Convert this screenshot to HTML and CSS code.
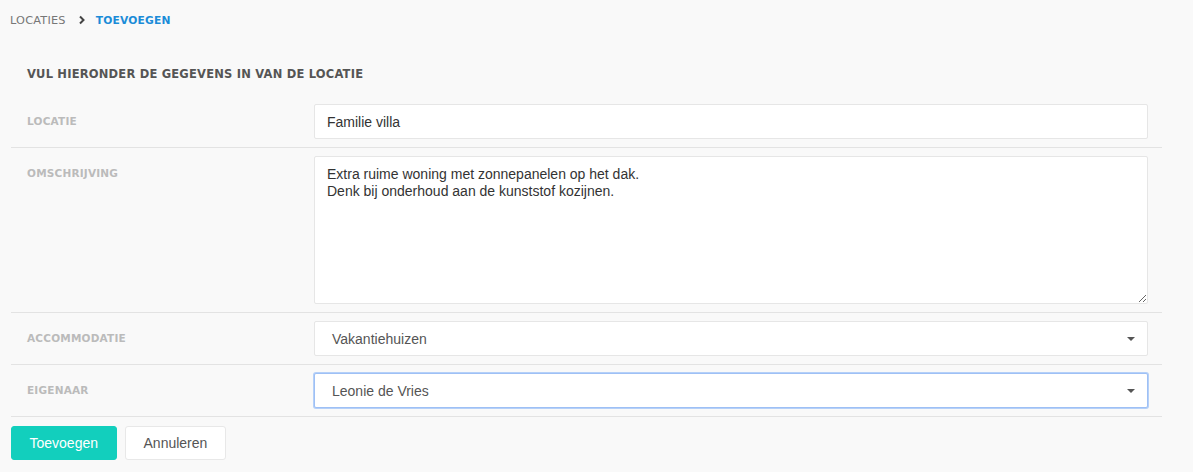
FILE: index.html
```html
<!DOCTYPE html>
<html lang="nl">
<head>
  <meta charset="UTF-8" />
  <meta name="viewport" content="width=device-width, initial-scale=1.0" />
  <title>Locatie toevoegen</title>
  <link rel="stylesheet" href="styles.css">
</head>
<body>
  <nav class="crumbs">
    <span class="crumb">LOCATIES</span>
    <svg class="crumb-sep" width="8" height="10" viewBox="0 0 8 10"><path d="M2 1.5 L5.5 5 L2 8.5" fill="none" stroke="#444" stroke-width="2"/></svg>
    <span class="crumb current">TOEVOEGEN</span>
  </nav>

  <form class="form">
    <h2 class="form-title">VUL HIERONDER DE GEGEVENS IN VAN DE LOCATIE</h2>

    <div class="row">
      <label class="label">LOCATIE</label>
      <div class="field"><input class="control" type="text" value="Familie villa"></div>
    </div>

    <div class="row">
      <label class="label">OMSCHRIJVING</label>
      <div class="field"><textarea class="control area">Extra ruime woning met zonnepanelen op het dak.
Denk bij onderhoud aan de kunststof kozijnen.</textarea></div>
    </div>

    <div class="row">
      <label class="label">ACCOMMODATIE</label>
      <div class="field">
        <div class="control select">
          <span>Vakantiehuizen</span>
          <span class="caret"></span>
        </div>
      </div>
    </div>

    <div class="row">
      <label class="label">EIGENAAR</label>
      <div class="field">
        <div class="control select focus">
          <span>Leonie de Vries</span>
          <span class="caret"></span>
        </div>
      </div>
    </div>

    <div class="actions">
      <button type="button" class="btn primary">Toevoegen</button>
      <button type="button" class="btn">Annuleren</button>
    </div>
  </form>
</body>
</html>
```

FILE: styles.css
```css
body {
  margin: 0;
  background: #f9f9f9;
  font-family: "Liberation Sans", Arial, sans-serif;
  color: #333;
  height: 472px;
  overflow: hidden;
}

.crumbs {
  display: flex;
  align-items: center;
  height: 40px;
  padding-left: 10px;
  font-family: "DejaVu Sans", sans-serif;
  font-size: 11.3px;
}

.crumb {
  color: #777;
  letter-spacing: 0.2px;
}

.crumb-sep {
  margin: 0 10px 0 12px;
}

.crumb.current {
  color: #1b8cd8;
  font-weight: bold;
  font-size: 10.7px;
}

.form {
  margin: 0 31px 0 11px;
}

.form-title {
  margin: 0;
  padding: 27px 0 0 16px;
  height: 29px;
  font-family: "DejaVu Sans", sans-serif;
  font-size: 11.5px;
  font-weight: bold;
  color: #555;
  letter-spacing: 0.2px;
}

.row {
  display: flex;
  align-items: flex-start;
  padding: 8px 0 8px;
  border-bottom: 1px solid #e3e3e3;
}

.label {
  width: 287px;
  padding-left: 16px;
  line-height: 34px;
  font-family: "DejaVu Sans", sans-serif;
  font-size: 10.5px;
  font-weight: bold;
  color: #bbb;
  letter-spacing: 0.2px;
}

.field {
  flex: 1;
  margin-right: 14px;
}

.control {
  box-sizing: border-box;
  display: block;
  width: 100%;
  height: 35px;
  padding: 0 12px;
  background: #fff;
  border: 1px solid #e6e6e6;
  border-radius: 2px;
  font-family: "Liberation Sans", Arial, sans-serif;
  font-size: 14px;
  color: #333;
  outline: none;
}

.area {
  height: 148px;
  padding: 9px 12px;
  line-height: 17px;
  resize: vertical;
}

.select {
  display: flex;
  align-items: center;
  justify-content: space-between;
  padding: 0 12px 0 17px;
  color: #555;
}

.select.focus {
  border-color: #9ec0f5;
  box-shadow: 0 0 0 1px #b5d0f8;
}

.caret {
  width: 0;
  height: 0;
  border-left: 4px solid transparent;
  border-right: 4px solid transparent;
  border-top: 4px solid #555;
}

.actions {
  display: flex;
  gap: 8px;
  padding-top: 9px;
}

.btn {
  height: 34px;
  padding: 0 18px;
  background: #fff;
  border: 1px solid #e8e8e8;
  border-radius: 3px;
  font-family: "Liberation Sans", Arial, sans-serif;
  font-size: 14px;
  color: #555;
}

.btn.primary {
  background: #12cfbd;
  border-color: #12cfbd;
  color: #fff;
  padding: 0 17.5px;
}
```
